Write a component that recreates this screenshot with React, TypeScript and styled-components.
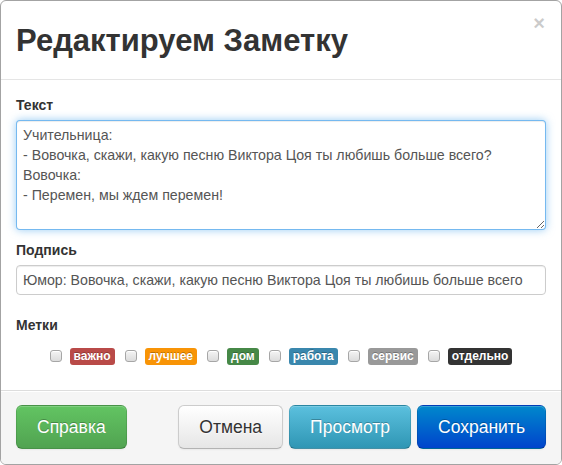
import React from 'react';
import styled, { createGlobalStyle, css } from 'styled-components';

const GlobalStyle = createGlobalStyle`
  html, body {
    margin: 0;
    padding: 0;
    background: #fff;
  }
  body {
    font-family: 'Liberation Sans', Arial, sans-serif;
    font-size: 14px;
    line-height: 20px;
    color: #333;
  }
  * {
    box-sizing: border-box;
  }
`;

type TagKind = 'important' | 'warning' | 'success' | 'info' | 'default' | 'inverse';
type BtnKind = 'success' | 'default' | 'info' | 'primary';

const TAG_COLORS: Record<TagKind, string> = {
  important: '#b94a48',
  warning: '#f89406',
  success: '#468847',
  info: '#3a87ad',
  default: '#999999',
  inverse: '#333333'
};

const BTN_GRADIENTS: Record<BtnKind, [string, string]> = {
  success: ['#62c462', '#51a351'],
  default: ['#ffffff', '#e6e6e6'],
  info: ['#5bc0de', '#2f96b4'],
  primary: ['#0088cc', '#0044cc']
};

const TAGS: { name: string; kind: TagKind }[] = [
  { name: 'важно', kind: 'important' },
  { name: 'лучшее', kind: 'warning' },
  { name: 'дом', kind: 'success' },
  { name: 'работа', kind: 'info' },
  { name: 'сервис', kind: 'default' },
  { name: 'отдельно', kind: 'inverse' }
];

const NOTE_TEXT = `Учительница:
- Вовочка, скажи, какую песню Виктора Цоя ты любишь больше всего?
Вовочка:
- Перемен, мы ждем перемен!`;

const App = () => (
  <>
    <GlobalStyle />
    <Modal>
      <Header>
        <Close type="button">×</Close>
        <Title>Редактируем Заметку</Title>
      </Header>

      <Body>
        <FieldLabel>Текст</FieldLabel>
        <TextArea defaultValue={NOTE_TEXT} />

        <FieldLabel>Подпись</FieldLabel>
        <TextInput
          type="text"
          defaultValue="Юмор: Вовочка, скажи, какую песню Виктора Цоя ты любишь больше всего"
        />

        <FieldLabel>Метки</FieldLabel>
        <Tags>
          {TAGS.map(tag => (
            <TagItem key={tag.name}>
              <Check type="checkbox" />
              <Tag kind={tag.kind}>{tag.name}</Tag>
            </TagItem>
          ))}
        </Tags>
      </Body>

      <Footer>
        <Button kind="success">Справка</Button>
        <RightButtons>
          <Button kind="default">Отмена</Button>
          <Button kind="info">Просмотр</Button>
          <Button kind="primary">Сохранить</Button>
        </RightButtons>
      </Footer>
    </Modal>
  </>
);

export default App;

const Modal = styled.div`
  position: relative;
  width: 562px;
  height: 465px;
  display: flex;
  flex-direction: column;
  border: 1px solid #a3a3a3;
  border-radius: 6px;
  background: #fff;
  overflow: hidden;
`;

const Header = styled.div`
  height: 79px;
  padding: 20px 15px 0;
  border-bottom: 1px solid #e5e5e5;
`;

const Title = styled.h3`
  margin: 0;
  font-size: 31px;
  line-height: 40px;
  font-weight: 700;
  color: #333;
`;

const Close = styled.button`
  position: absolute;
  top: 12px;
  right: 16px;
  padding: 0;
  border: 0;
  background: transparent;
  font-family: 'Liberation Sans', Arial, sans-serif;
  font-size: 20px;
  font-weight: 700;
  line-height: 20px;
  color: #000;
  opacity: 0.2;
  text-shadow: 0 1px 0 #fff;
  cursor: pointer;
`;

const Body = styled.div`
  flex: 1;
  padding: 15px 15px 15px;
  display: flex;
  flex-direction: column;
`;

const FieldLabel = styled.label`
  display: block;
  margin-bottom: 5px;
  font-weight: 700;
  line-height: 20px;
  color: #333;
`;

const fieldStyles = css`
  display: block;
  width: 100%;
  margin: 0;
  padding: 4px 6px;
  font-family: 'Liberation Sans', Arial, sans-serif;
  font-size: 14.2px;
  line-height: 20px;
  color: #555;
  background: #fff;
  border: 1px solid #ccc;
  border-radius: 4px;
  box-shadow: inset 0 1px 1px rgba(0, 0, 0, 0.075);
  outline: none;
`;

const TextArea = styled.textarea`
  ${fieldStyles};
  height: 110px;
  margin-bottom: 10px;
  resize: vertical;
  border-color: rgba(82, 168, 236, 0.8);
  box-shadow: inset 0 1px 1px rgba(0, 0, 0, 0.075),
    0 0 8px rgba(82, 168, 236, 0.6);
`;

const TextInput = styled.input`
  ${fieldStyles};
  height: 30px;
  margin-bottom: 20px;
`;

const Tags = styled.div`
  display: flex;
  justify-content: center;
  align-items: center;
  gap: 10px;
  height: 34px;
  padding-bottom: 1px;
`;

const TagItem = styled.span`
  display: inline-flex;
  align-items: center;
  gap: 8px;
`;

const Check = styled.input`
  appearance: none;
  width: 12px;
  height: 12px;
  margin: 0 0 1px;
  border: 1px solid #a6a6a6;
  border-radius: 3px;
  background: linear-gradient(#f4f4f4, #dcdcdc);
  box-shadow: inset 0 1px 0 #fff;
`;

const Tag = styled.span<{ kind: TagKind }>`
  display: inline-block;
  padding: 1px 4px;
  font-size: 12px;
  font-weight: 700;
  line-height: 15px;
  color: #fff;
  text-shadow: 0 -1px 0 rgba(0, 0, 0, 0.25);
  white-space: nowrap;
  border-radius: 3px;
  background-color: ${({ kind }) => TAG_COLORS[kind]};
`;

const Footer = styled.div`
  display: flex;
  justify-content: space-between;
  align-items: flex-start;
  height: 74px;
  padding: 14px 15px 15px;
  background: #f5f5f5;
  border-top: 1px solid #ddd;
  box-shadow: inset 0 1px 0 #fff;
`;

const RightButtons = styled.div`
  display: flex;
  gap: 6px;
`;

const Button = styled.button<{ kind: BtnKind }>`
  height: 44px;
  padding: 11px 20px;
  font-family: 'Liberation Sans', Arial, sans-serif;
  font-size: 17.5px;
  line-height: 20px;
  border-radius: 6px;
  cursor: pointer;
  background-image: ${({ kind }) =>
    `linear-gradient(${BTN_GRADIENTS[kind][0]}, ${BTN_GRADIENTS[kind][1]})`};
  border: 1px solid rgba(0, 0, 0, 0.1);
  border-bottom-color: rgba(0, 0, 0, 0.25);
  color: #fff;
  text-shadow: 0 -1px 0 rgba(0, 0, 0, 0.25);
  box-shadow: inset 0 1px 0 rgba(255, 255, 255, 0.2),
    0 1px 2px rgba(0, 0, 0, 0.05);
  ${({ kind }) =>
    kind === 'default' &&
    css`
      color: #333;
      border-color: #ccc;
      border-bottom-color: #b3b3b3;
      text-shadow: 0 1px 1px rgba(255, 255, 255, 0.75);
    `}
`;
